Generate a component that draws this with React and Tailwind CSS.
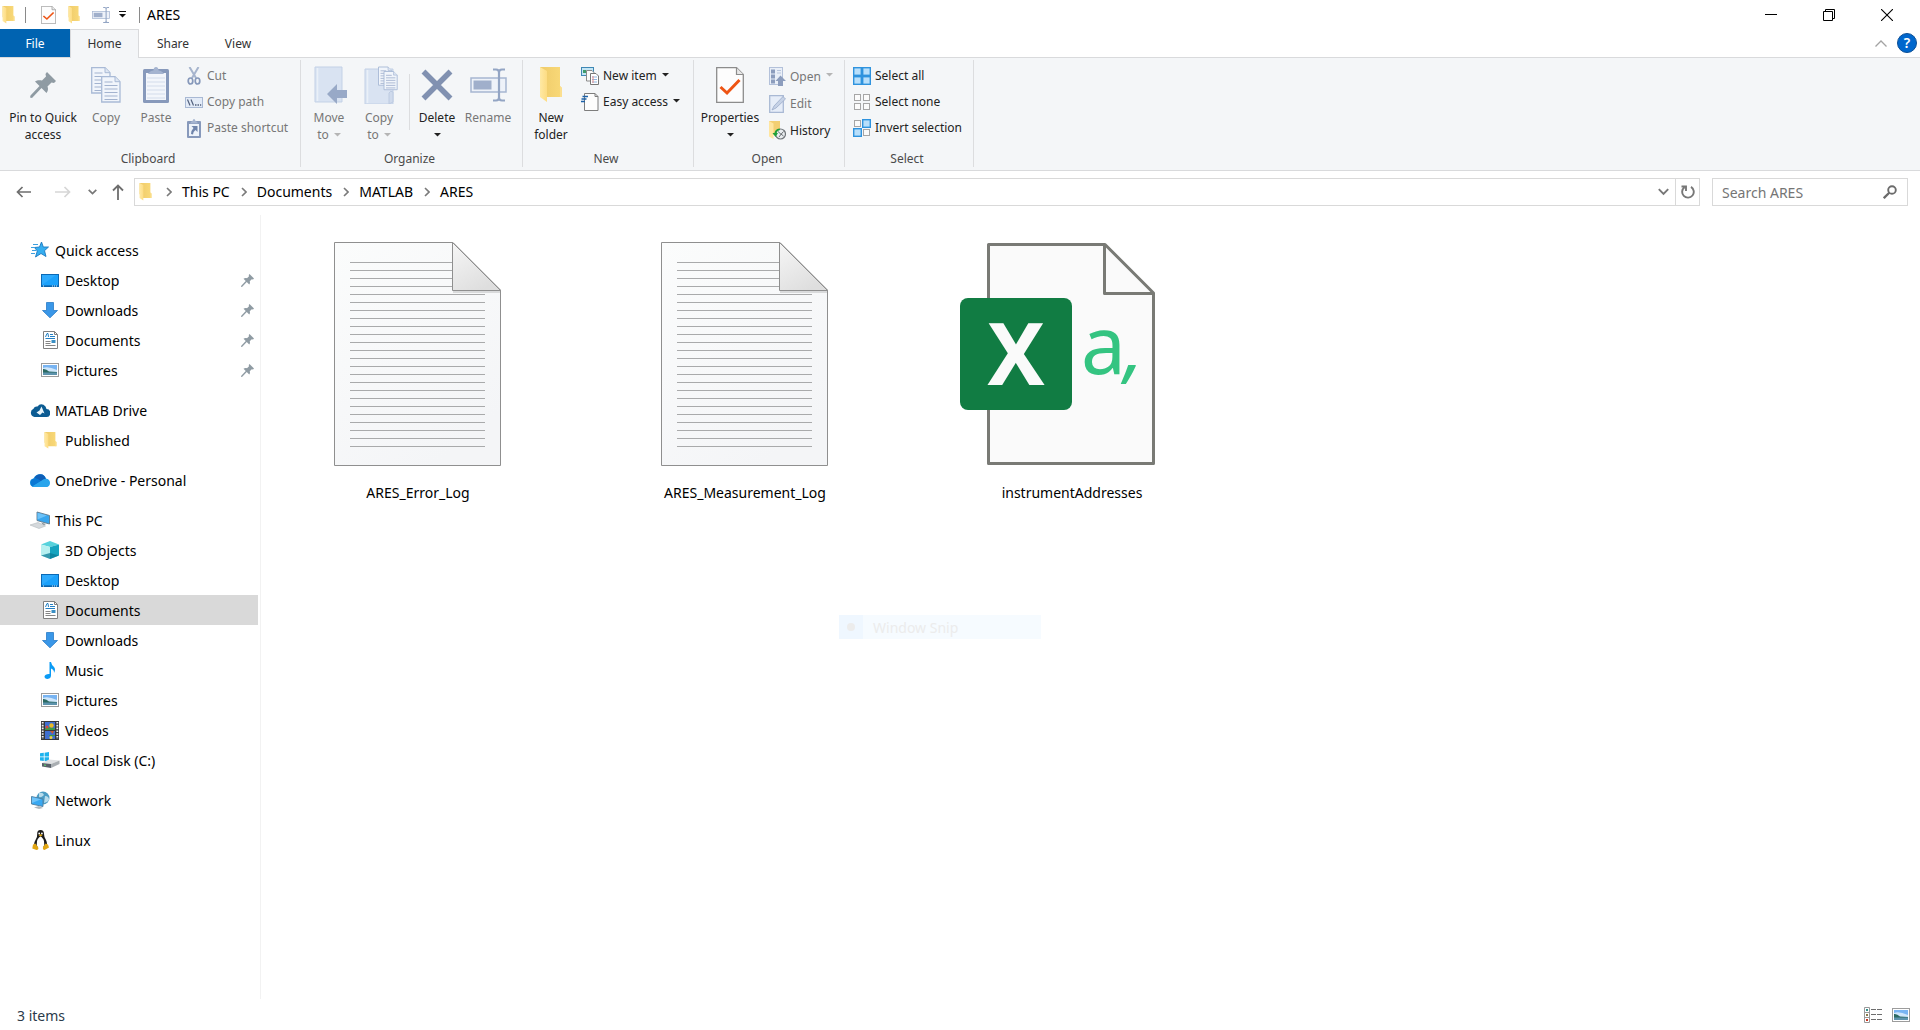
import React from "react";

/* ---------- small glyphs ---------- */

const Caret = ({ className = "" }) => (
  <svg width="7" height="4" viewBox="0 0 7 4" className={className} fill="currentColor" aria-hidden="true">
    <path d="M0 0h7L3.500 3.500z" />
  </svg>
);

const Chevron = ({ className = "" }) => (
  <svg width="6" height="10" viewBox="0 0 6 10" className={className} fill="none" stroke="#7a7a7a" strokeWidth="1.6" aria-hidden="true">
    <path d="M1 1l4 4-4 4" />
  </svg>
);

const Folder = ({ w = 13, h = 18 }) => (
  <svg width={w} height={h} viewBox="0 0 24 36" preserveAspectRatio="none" aria-hidden="true">
    <defs>
      <linearGradient id="folderFront" x1="0" x2="1">
        <stop offset="0" stopColor="#ffe9a4" />
        <stop offset="1" stopColor="#fddc83" />
      </linearGradient>
      <linearGradient id="folderBack" x1="0" x2="1">
        <stop offset="0" stopColor="#efcb6a" />
        <stop offset="1" stopColor="#f9d978" />
      </linearGradient>
    </defs>
    <path d="M1 0H21V19L23 21V30H7L1 22z" fill="url(#folderBack)" />
    <path d="M1 0L8 4V35L1 30z" fill="url(#folderFront)" />
    <path d="M21 19l2 2v9h-2z" fill="#fbdf90" />
  </svg>
);

const CheckDoc = ({ w = 28, h = 36 }) => (
  <svg width={w} height={h} viewBox="0 0 28 36" preserveAspectRatio="none" aria-hidden="true">
    <path d="M.7.7H20.500L27.300 7.500V35.300H.7z" fill="#fdfdfd" stroke="#8c8c8c" strokeWidth="1.300" />
    <path d="M20.500.7V7.500H27.300" fill="#e8e8e8" stroke="#8c8c8c" strokeWidth="1.200" />
    <path d="M4.500 20L11 26L23.500 13" fill="none" stroke="#ee5414" strokeWidth="3" />
  </svg>
);

const RenameIcon = ({ w = 37, h = 34 }) => (
  <svg width={w} height={h} viewBox="0 0 37 34" aria-hidden="true">
    <rect x="1" y="10" width="35" height="14" fill="#eef2f9" stroke="#a6b6d1" strokeWidth="1.500" />
    <rect x="3.500" y="12.500" width="18" height="9" fill="#a0afcb" />
    <path d="M23 1.500h3q3 0 3 3 0-3 3-3h3M29 4v26M23 32.500h3q3 0 3-3 0 3 3 3h3" fill="none" stroke="#93a5c4" strokeWidth="2.200" />
  </svg>
);

const Pin = ({ size = 26 }) => (
  <svg width={size} height={size} viewBox="0 0 26 26" aria-hidden="true">
    <path d="M17 0L26 9L24 11L21.500 10.500L17.500 14.500C18.500 17 18 19 16.500 21L11.500 16L2 26L0 25.500L.5 23.500L9.500 14L5 9.500C7 8 9.500 8 12 8.500L16 4.500L15.500 2z" fill="#8f9ba3" />
  </svg>
);

const Sheet = ({ x = 0, y = 0 }) => (
  <g transform={`translate(${x} ${y})`}>
    <path d="M.7.7H14L19 5.700V26H.7z" fill="#f1f5fb" stroke="#a9bad6" strokeWidth="1.300" />
    <path d="M14 .7V5.700H19" fill="#dfe7f3" stroke="#a9bad6" />
    <path d="M3.500 6h8M3.500 9.500h13M3.500 13h13M3.500 16.500h13M3.500 20h13M3.500 23.500h13" stroke="#a3b3cf" strokeWidth="1.200" />
  </g>
);

const CopyIcon = () => (
  <svg width="30" height="36" viewBox="0 0 30 36" aria-hidden="true">
    <Sheet />
    <Sheet x={10} y={9} />
  </svg>
);

const PasteIcon = () => (
  <svg width="26" height="36" viewBox="0 0 26 36" aria-hidden="true">
    <rect x="0" y="2" width="26" height="34" rx="1.500" fill="#8799bb" />
    <rect x="3" y="6" width="20" height="27" fill="#f3f6fb" />
    <path d="M4 11h18M4 15h18M4 19h18M4 23h18M4 27h18M4 31h18" stroke="#d3dcec" strokeWidth="1.200" />
    <path d="M5 7Q7 3.500 10.500 3.500Q10.500 0 13 0T15.500 3.500Q19 3.500 21 7z" fill="#a5b4d0" />
  </svg>
);

const CutIcon = () => (
  <svg width="14" height="18" viewBox="0 0 14 18" fill="none" aria-hidden="true">
    <path d="M2.500 0L9 11M11.500 0L5 11" stroke="#a6b4cd" strokeWidth="2" />
    <ellipse cx="3.500" cy="14" rx="2.300" ry="3" stroke="#8698ba" strokeWidth="1.700" />
    <ellipse cx="10.500" cy="14" rx="2.300" ry="3" stroke="#8698ba" strokeWidth="1.700" />
  </svg>
);

const CopyPathIcon = () => (
  <svg width="18" height="11" viewBox="0 0 18 11" aria-hidden="true">
    <rect x=".5" y=".5" width="17" height="10" fill="#e3ebf7" stroke="#a9b9d4" />
    <path d="M2.500 2.500L5 8.500M6 2.500L8.500 8.500" stroke="#53627e" strokeWidth="1.200" />
    <path d="M10 8h1.500M12.500 8H14M15 8h1.200" stroke="#53627e" strokeWidth="1.300" />
  </svg>
);

const PasteShortcutIcon = () => (
  <svg width="14" height="19" viewBox="0 0 14 19" aria-hidden="true">
    <rect y="2" width="14" height="17" rx="1" fill="#8799bb" />
    <rect x="2" y="5" width="10" height="12" fill="#eef3fa" />
    <path d="M3 4.500Q4 2 5.500 2Q6 0 7 0T8.500 2Q10 2 11 4.500z" fill="#a5b4d0" />
    <path d="M4.500 7H10.500V13L8.500 11Q6 12.500 6 15.500L4 15Q4 11.500 6.500 9z" fill="#6f84ab" />
  </svg>
);

const MoveToIcon = () => (
  <svg width="34" height="38" viewBox="0 0 34 38" aria-hidden="true">
    <path d="M1 1H28V36H1z" fill="#d9e3f2" stroke="#c3d1e6" />
    <path d="M3.500 2V35" stroke="#eaf0f8" strokeWidth="1.500" />
    <path d="M13 28L23 18V24H33V32H23V38z" fill="#98a9c7" />
  </svg>
);

const CopyToIcon = () => (
  <svg width="34" height="38" viewBox="0 0 34 38" aria-hidden="true">
    <path d="M1 3H29V38H1z" fill="#d9e3f2" stroke="#c3d1e6" />
    <path d="M3.500 4V37" stroke="#eaf0f8" strokeWidth="1.500" />
    <path d="M25 38V27Q26.500 24 29 26V36z" fill="#cfdaec" stroke="#bccae1" />
    <g transform="translate(14 .5) scale(.72)">
      <Sheet />
    </g>
    <g transform="translate(19.500 5) scale(.72)">
      <Sheet />
    </g>
  </svg>
);

const DeleteIcon = () => (
  <svg width="32" height="32" viewBox="0 0 32 32" aria-hidden="true">
    <path d="M2.500 2.500L29.500 29.500M29.500 2.500L2.500 29.500" stroke="#8191b1" strokeWidth="5.500" />
  </svg>
);

const NewItemIcon = () => (
  <svg width="18" height="18" viewBox="0 0 18 18" aria-hidden="true">
    <rect x=".5" y=".5" width="12" height="8" fill="#c4e6f5" stroke="#3f88b5" />
    <path d="M2 3h3v3H2z" fill="#3f9c6c" />
    <path d="M5.500 3.500H11L13 5.500V14H5.500z" fill="#fafafa" stroke="#8a8a8a" />
    <path d="M9.500 6.500H15L17.500 9V17.500H9.500z" fill="#fff" stroke="#777" />
    <path d="M11 10h5M11 12.500h5M11 15h5" stroke="#8db5e0" />
    <path d="M12 9v7" stroke="#e58b8b" />
  </svg>
);

const EasyAccessIcon = () => (
  <svg width="18" height="18" viewBox="0 0 18 18" aria-hidden="true">
    <path d="M3.500.5H14L17 3.500V17.500H3.500z" fill="#fdfdfd" stroke="#7d7d7d" />
    <path d="M14 .5V3.500H17" fill="none" stroke="#7d7d7d" />
    <path d="M1.500 3.500H7M.5 6H5.500M0 8.500H4" stroke="#1d62a8" strokeWidth="1.400" />
  </svg>
);

const OpenIcon = () => (
  <svg width="17" height="19" viewBox="0 0 17 19" aria-hidden="true">
    <rect x=".5" y=".5" width="13" height="17" fill="#e9eff8" stroke="#b3c1da" />
    <path d="M2 2.500h4v4H2zM2 7.500h4v4H2zM2 12.500h4v4H2z" fill="#8c9dbd" />
    <path d="M8 3.500h4M8 6h4" stroke="#b8c5dc" />
    <path d="M11.500 8.500L17 14H14V19H9V14H6.500z" fill="#8c9dbd" />
  </svg>
);

const EditIcon = () => (
  <svg width="17" height="18" viewBox="0 0 17 18" aria-hidden="true">
    <path d="M.7.7H14.300V17.300H.7z" fill="#e6edf8" stroke="#a9b9d4" strokeWidth="1.300" />
    <path d="M3 15L5 11L14 1.500L16.500 4L7 13z" fill="#c6d2e6" stroke="#9aabc9" strokeWidth=".8" />
  </svg>
);

const HistoryIcon = () => (
  <svg width="17" height="19" viewBox="0 0 17 19" aria-hidden="true">
    <path d="M0 0H11V14H4L0 12z" fill="#f2cf72" />
    <path d="M0 0L4.500 2.500V18L0 15.500z" fill="#ffe6a0" />
    <circle cx="11.500" cy="13" r="5" fill="#e9edf0" stroke="#6f7579" strokeWidth="1.200" />
    <path d="M9 10.500L12 13.300L14.500 10.500M12 13.300L10 16M12 13L14.500 15" stroke="#5b6165" fill="none" strokeWidth=".9" />
    <path d="M10.500 7.500Q6 8 5.500 12H3.500L6.500 16L9 12H7.500Q8 9.500 11 9z" fill="#1fa038" />
  </svg>
);

const Cells = ({ on }) => (
  <svg width="18" height="18" viewBox="0 0 18 18" aria-hidden="true">
    {[[0, 0], [9, 0], [0, 9], [9, 9]].map(([x, y], i) =>
      on[i] ? (
        <rect key={i} x={x + 0.7} y={y + 0.7} width="7.600" height="7.600" fill="#b8dffb" stroke="#2f93de" strokeWidth="1.400" />
      ) : (
        <rect key={i} x={x + 1.5} y={y + 1.500} width="6" height="6" fill="#fbfbfb" stroke="#a6a6a6" />
      )
    )}
  </svg>
);

/* ---------- navigation icons ---------- */

const StarIcon = () => (
  <svg width="20" height="18" viewBox="0 0 20 18" aria-hidden="true">
    <path d="M11.500 1L13.300 6H18.500L14.500 9.700L16 15.500L11 12.500L5.500 16L7.300 10L4.500 6.500L9.500 6z" fill="#35aef0" stroke="#1c78c0" strokeWidth=".9" />
    <path d="M3 3.500h5M1 6.500h4M2 9.500h4M1 12.500h4" stroke="#3c9fdf" />
  </svg>
);

const DesktopIcon = () => (
  <svg width="18" height="13" viewBox="0 0 18 13" aria-hidden="true">
    <rect x=".5" y=".5" width="17" height="12" fill="#1ba1fb" stroke="#0b69b5" />
    <path d="M1 11L15 1H1z" fill="#2eaafd" />
    <path d="M1 12h16" stroke="#0b62a8" strokeWidth="1.200" />
    <path d="M2 12h1M11 12h1M13 12h1M15 12h1" stroke="#d8efff" />
  </svg>
);

const DownloadIcon = () => (
  <svg width="16" height="16" viewBox="0 0 16 16" aria-hidden="true">
    <path d="M4.500.5H11.500V8.500H15.500L8 15.800L.5 8.500H4.500z" fill="#3a97e8" stroke="#2a7bc6" strokeWidth=".8" />
  </svg>
);

const DocumentIcon = () => (
  <svg width="15" height="18" viewBox="0 0 15 18" aria-hidden="true">
    <path d="M.5.5H11.500L14.500 3.500V17.500H.5z" fill="#fff" stroke="#808080" />
    <path d="M11.500.5V3.500H14.500" fill="none" stroke="#808080" />
    <path d="M2.500 6L4 2.500H5L5.500 6M7 3.500h3M7 5.500h5M2.500 7.500h9.500" stroke="#2480c4" fill="none" />
    <path d="M2.500 10.500h5M2.500 12.500h5M2.500 14.500h10" stroke="#858585" />
    <rect x="8.500" y="9" width="4" height="3" fill="#3b8fc4" />
  </svg>
);

const PictureIcon = () => (
  <svg width="18" height="14" viewBox="0 0 18 14" aria-hidden="true">
    <rect x=".5" y=".5" width="17" height="13" fill="#fff" stroke="#9c9c9c" />
    <rect x="2" y="2" width="14" height="10" fill="#78b4f2" />
    <path d="M2 5Q7 3 16 7V9H2z" fill="#cfe6fb" />
    <path d="M2 6Q5 5.500 8 8.500L16 9V10H2z" fill="#2c6a62" />
    <path d="M2 9.500H16V12H2z" fill="#5d93ad" />
  </svg>
);

const MatlabIcon = () => (
  <svg width="20" height="13" viewBox="0 0 20 13" aria-hidden="true">
    <path d="M4.500 13A4.300 4.300 0 0 1 3.500 4.800Q4.500 2 7.500 2.500Q10-1 13.500.8Q16 2 16.500 5A4 4 0 0 1 16 13z" fill="#0c5c93" />
    <path d="M6.500 8.500L9.500 6.500L11.500 2.500L14.500 9.500L12.500 8.500L10 11z" fill="#eaf5fb" />
  </svg>
);

const OneDriveIcon = () => (
  <svg width="20" height="13" viewBox="0 0 20 13" aria-hidden="true">
    <path d="M4 13A4.300 4.300 0 0 1 3.500 4.500Q6 0 10.500 .3Q14.500.5 16 4.800A4.200 4.200 0 0 1 16 13z" fill="#1490df" />
    <path d="M4.500 4Q6.500 0 10.500.3Q14.500.5 15.800 4.800L11 7.500z" fill="#0f5fb8" />
    <path d="M1 11Q-.5 6 4 4.500Q7 3.500 11 7.200L2.500 12.500z" fill="#0a78d4" />
    <path d="M2.500 12.300L11 7Q14 4.500 16.500 4.800Q20 5.500 20 9Q19.800 12.800 16 13H4Q3 13 2.500 12.300z" fill="#2aa5ec" />
  </svg>
);

const ThisPcIcon = () => (
  <svg width="20" height="18" viewBox="0 0 20 18" aria-hidden="true">
    <path d="M7 1L19.500 4.500V13L7 9.500z" fill="#38a6ee" stroke="#62798a" strokeWidth=".9" />
    <path d="M7.500 1.800L17 4.400L7.500 8.500z" fill="#6cc2f8" />
    <path d="M11 11.500L16 13L13.500 14.500z" fill="#8b979e" />
    <path d="M0 14L8 11.500L15.500 15L9 17.500z" fill="#d5d9dc" stroke="#b4babd" strokeWidth=".6" />
  </svg>
);

const CubeIcon = () => (
  <svg width="18" height="18" viewBox="0 0 18 18" aria-hidden="true">
    <path d="M0 3.500L9 0L18 3.500L9 6z" fill="#57d2dc" />
    <path d="M0 3.500L9 6V18L0 14.500z" fill="#b6f0f0" />
    <path d="M18 3.500L9 6V18L18 14.500z" fill="#16a4bf" />
    <path d="M0 14.500L9 12L18 14.500L9 18z" fill="#0b7c97" opacity=".75" />
  </svg>
);

const MusicIcon = () => (
  <svg width="12" height="17" viewBox="0 0 12 17" aria-hidden="true">
    <path d="M5.500 0H7Q7.500 3 10 5Q12 7.500 10 11Q10.300 7.500 7 6.500V13.500Q7 16.500 3.500 17Q.5 16.800.5 14.500Q1 11.800 5.500 12z" fill="#0a9bf5" />
  </svg>
);

const VideoIcon = () => (
  <svg width="18" height="19" viewBox="0 0 18 19" aria-hidden="true">
    <rect width="18" height="19" fill="#37383a" />
    <path d="M1.700 1V18M16.300 1V18" stroke="#f2f2f2" strokeWidth="1.800" strokeDasharray="1.600 1.200" />
    <rect x="4" y="1" width="10" height="8" fill="#3f6fd0" />
    <rect x="4" y="10" width="10" height="8" fill="#3f6fd0" />
    <path d="M4 7.500Q7 5 14 7.500V9H4zM8 14H14V15H8z" fill="#3b9b46" />
    <circle cx="10.500" cy="4.500" r="2.200" fill="#e9b928" />
    <circle cx="6" cy="6" r="1.500" fill="#d84a3a" />
    <path d="M9 10H13L11.500 13z" fill="#cc5a2b" />
    <circle cx="10" cy="16.500" r="1.500" fill="#f0d23c" />
  </svg>
);

const DiskIcon = () => (
  <svg width="20" height="16" viewBox="0 0 20 16" aria-hidden="true">
    <path d="M0 1.300L3.800.8V4.500H0zM4.600.7L9 0V4.500H4.600zM0 5.300H3.800V9L0 8.500zM4.600 5.300H9V9.700L4.600 9.100z" fill="#1db3ee" />
    <path d="M2 11L9 7.500L19.500 8.500L11 12z" fill="#dfe1e3" />
    <path d="M2 11L11 12V16L2 14.500z" fill="#58606a" />
    <path d="M11 12L19.500 8.500V12L11 16z" fill="#a9aeb2" />
    <path d="M4 13L6 13.300" stroke="#5fe06c" />
  </svg>
);

const NetworkIcon = () => (
  <svg width="19" height="18" viewBox="0 0 19 18" aria-hidden="true">
    <circle cx="12" cy="7" r="6.500" fill="#4b9cc4" />
    <path d="M8 2Q12 1 13 4Q10 7 8 6zM14 5Q18 5 18 9Q16 12 13 12z" fill="#b7dcec" />
    <path d="M.5 5.500L12 8V15.500L.5 13z" fill="#38a8f2" stroke="#4f7d9d" strokeWidth=".9" />
    <path d="M1 6.200L10 8.200L1 12z" fill="#70c4f9" />
    <path d="M3 16.500L8 15L12 17L8 18z" fill="#b0b7bc" />
  </svg>
);

const LinuxIcon = () => (
  <svg width="17" height="20" viewBox="0 0 17 20" aria-hidden="true">
    <path d="M8.500 0Q12 0 12 4Q12 7 14 10Q16 14 14 18H3Q1 14 3.500 10Q5.500 7 5.200 4Q5 0 8.500 0z" fill="#1b1b1b" />
    <path d="M8.500 6.500Q10.500 7 12 11Q13 15 11 18H6Q4 15 5 11Q6.500 7 8.500 6.500z" fill="#fff" />
    <circle cx="7.200" cy="3.500" r=".9" fill="#fff" />
    <circle cx="9.900" cy="3.500" r=".9" fill="#fff" />
    <path d="M6.500 5L8.500 4.200L10.700 5L8.500 6.600z" fill="#eeb111" />
    <path d="M1 14.500L3.500 13.500L6.500 18Q6.500 20 4.500 20L.3 18.500zM16 14.500L13.500 13.500L11 17Q10.500 20 12.500 20L17 17.500z" fill="#e0a512" />
  </svg>
);

/* ---------- large file icons ---------- */

const TextFileIcon = () => (
  <svg width="256" height="256" viewBox="0 0 256 256" aria-hidden="true">
    <defs>
      <linearGradient id="paper" x1="0" y1="0" x2=".6" y2="1">
        <stop offset="0" stopColor="#fbfcfc" />
        <stop offset="1" stopColor="#f4f5f7" />
      </linearGradient>
      <linearGradient id="fold" x1="0" y1="0" x2=".6" y2="1">
        <stop offset="0" stopColor="#f6f6f6" />
        <stop offset="1" stopColor="#dedede" />
      </linearGradient>
    </defs>
    <path d="M44.500 16.500H163L210.500 64V239.500H44.500z" fill="url(#paper)" stroke="#8f8f8f" />
    {Array.from({ length: 24 }, (_, i) => (
      <path key={i} d={`M60 ${36.5 + i * 8}H${i < 4 ? 162 : 195}`} stroke="#a9aaab" />
    ))}
    <path d="M163 66H210" stroke="#d9dadb" strokeWidth="2" />
    <path d="M162.500 16.500V64.500H210.500z" fill="url(#fold)" stroke="#8f8f8f" />
  </svg>
);

const ExcelCsvIcon = () => (
  <svg width="256" height="256" viewBox="0 0 256 256" aria-hidden="true">
    <path d="M44.500 18.500H161L209.500 67V237.500H44.500z" fill="#fafafa" stroke="#797a75" strokeWidth="3" strokeLinejoin="round" />
    <path d="M160.500 19V67.500H209" fill="none" stroke="#797a75" strokeWidth="3" strokeLinejoin="round" />
    <rect x="16" y="72" width="112" height="112" rx="8" fill="#117c43" />
    <text x="72" y="159" textAnchor="middle" fontFamily="'Noto Sans', sans-serif" fontWeight="700" fontSize="86" fill="#fafafa">X</text>
    <text x="137" y="148" fontFamily="'Noto Sans', sans-serif" fontSize="80" fill="#34c481">a</text>
    <text x="180" y="148" fontFamily="'Noto Sans', sans-serif" fontSize="76" fontStyle="italic" fill="#34c481">,</text>
  </svg>
);

/* ---------- ribbon ---------- */

const Group = ({ label, className, inset, children }) => (
  <section aria-label={label} className={`mt-[2px] mb-[3px] flex flex-col border-r border-[#dcdddf] pt-[2px] ${className}`}>
    <div className={`flex h-[88px] items-start ${inset}`}>{children}</div>
    <div className="pt-px pr-1 text-center leading-4 text-[#4a4a4a]">{label}</div>
  </section>
);

const Large = ({ icon, lines, caret, disabled, className }) => (
  <button type="button" disabled={disabled} className={`flex shrink-0 flex-col items-center pt-[3px] leading-[17px] whitespace-nowrap ${disabled ? "text-[#777]" : "text-[#222]"} ${className}`}>
    <span className="mb-1 flex h-10 items-center justify-center">{icon}</span>
    <span>{lines[0]}</span>
    {(lines[1] || caret) && (
      <span className="flex h-[17px] items-center justify-center gap-[5px]">
        {lines[1]}
        {caret && <Caret className={disabled ? "text-[#b5b5b5]" : "text-[#222]"} />}
      </span>
    )}
  </button>
);

const Small = ({ icon, label, caret, disabled, className = "h-[26px]" }) => (
  <button type="button" disabled={disabled} className={`flex items-center whitespace-nowrap ${disabled ? "text-[#777]" : "text-[#222]"} ${className}`}>
    <span className="mr-1 flex w-[18px] justify-center">{icon}</span>
    {label}
    {caret && <Caret className={`mb-[3px] ml-[5px] ${disabled ? "text-[#b5b5b5]" : "text-[#222]"}`} />}
  </button>
);

const SmallColumn = ({ className = "", children }) => (
  <div className={`flex flex-col items-start pt-px ${className}`}>{children}</div>
);

const Ribbon = () => (
  <div className="flex border-b border-[#d9dadc] bg-[#f4f6f8] text-xs">
    <Group label="Clipboard" className="w-[301px]" inset="pl-[5px]">
      <Large className="w-[76px]" icon={<Pin />} lines={["Pin to Quick", "access"]} />
      <Large className="w-[50px]" icon={<CopyIcon />} lines={["Copy"]} disabled />
      <Large className="w-[50px]" icon={<PasteIcon />} lines={["Paste"]} disabled />
      <SmallColumn className="ml-1">
        <Small icon={<CutIcon />} label="Cut" disabled />
        <Small icon={<CopyPathIcon />} label="Copy path" disabled />
        <Small icon={<PasteShortcutIcon />} label="Paste shortcut" disabled />
      </SmallColumn>
    </Group>
    <Group label="Organize" className="w-[222px]" inset="pl-[3px]">
      <Large className="w-[50px]" icon={<span className="pl-1"><MoveToIcon /></span>} lines={["Move", "to"]} caret disabled />
      <Large className="w-[50px]" icon={<span className="pl-1"><CopyToIcon /></span>} lines={["Copy", "to"]} caret disabled />
      <div className="mt-3 mr-0.5 ml-[5px] h-14 w-px bg-[#dcdddf]" />
      <Large className="w-[50px]" icon={<DeleteIcon />} lines={["Delete"]} caret />
      <Large className="w-[52px]" icon={<RenameIcon />} lines={["Rename"]} disabled />
    </Group>
    <Group label="New" className="w-[171px]" inset="pl-[3px]">
      <Large className="w-[50px]" icon={<Folder w={24} h={36} />} lines={["New", "folder"]} />
      <SmallColumn className="ml-[5px]">
        <Small icon={<NewItemIcon />} label="New item" caret />
        <Small icon={<EasyAccessIcon />} label="Easy access" caret />
      </SmallColumn>
    </Group>
    <Group label="Open" className="w-[151px]" inset="pl-[2px]">
      <Large className="w-[68px]" icon={<CheckDoc />} lines={["Properties"]} caret />
      <SmallColumn className="ml-1">
        <Small className="h-[27px]" icon={<OpenIcon />} label="Open" caret disabled />
        <Small className="h-[27px]" icon={<EditIcon />} label="Edit" disabled />
        <Small className="h-[27px]" icon={<HistoryIcon />} label="History" />
      </SmallColumn>
    </Group>
    <Group label="Select" className="w-[129px]" inset="pl-2">
      <SmallColumn>
        <Small icon={<Cells on={[1, 1, 1, 1]} />} label="Select all" />
        <Small icon={<Cells on={[0, 0, 0, 0]} />} label="Select none" />
        <Small icon={<Cells on={[0, 1, 1, 0]} />} label="Invert selection" />
      </SmallColumn>
    </Group>
  </div>
);

/* ---------- window chrome ---------- */

const TitleBar = () => (
  <header className="flex h-[29px] items-center">
    <div className="flex items-center pl-[2px]">
      <Folder w={13} h={18} />
      <span className="mr-[15px] ml-[10px] h-4 w-px bg-[#8a8a8a]" />
      <button type="button" aria-label="Properties"><CheckDoc w={15} h={18} /></button>
      <button type="button" aria-label="New folder" className="ml-3"><Folder w={12} h={18} /></button>
      <button type="button" aria-label="Rename" className="ml-3"><RenameIcon w={18} h={18} /></button>
      <button type="button" aria-label="Customize Quick Access Toolbar" className="ml-[9px]">
        <svg width="7" height="7" viewBox="0 0 7 7" aria-hidden="true">
          <path d="M0 .5h7" stroke="#111" />
          <path d="M0 3h7L3.500 6.500z" fill="#111" />
        </svg>
      </button>
      <span className="ml-[13px] h-4 w-px bg-[#8a8a8a]" />
    </div>
    <h1 className="ml-[7px] text-sm">ARES</h1>
    <div className="mr-1 ml-auto flex">
      <button type="button" aria-label="Minimize" className="flex h-7 w-[58px] items-center justify-center">
        <svg width="12" height="12" viewBox="0 0 12 12"><path d="M0 5.500h12" stroke="#000" /></svg>
      </button>
      <button type="button" aria-label="Restore" className="flex h-7 w-[58px] items-center justify-center">
        <svg width="12" height="12" viewBox="0 0 12 12" fill="none" stroke="#000"><path d="M.5 2.500h9v9h-9zM2.500 2.500V.5h9v9h-2" /></svg>
      </button>
      <button type="button" aria-label="Close" className="flex h-7 w-[58px] items-center justify-center">
        <svg width="12" height="12" viewBox="0 0 12 12" stroke="#000" strokeWidth="1.100"><path d="M0 0l12 12M12 0L0 12" /></svg>
      </button>
    </div>
  </header>
);

const Tabs = () => (
  <div className="flex h-[29px] items-stretch text-xs text-[#333]">
    <button type="button" className="w-[70px] border-b border-[#d9dadc] bg-[#0063b1] pt-px text-white">File</button>
    <button type="button" className="w-[69px] border border-b-0 border-[#d9dadc] bg-[#f4f6f8]">Home</button>
    <div className="flex flex-1 items-center border-b border-[#d9dadc]">
      <button type="button" className="w-[68px] pt-px">Share</button>
      <button type="button" className="w-[62px] pt-px">View</button>
      <button type="button" aria-label="Minimize the Ribbon" className="mr-[10px] ml-auto">
        <svg width="12" height="7" viewBox="0 0 12 7" fill="none" stroke="#a3a3a3" strokeWidth="1.300"><path d="M.5 6.500L6 1l5.500 5.500" /></svg>
      </button>
      <button type="button" aria-label="Help" className="mr-[3px] flex size-5 items-center justify-center rounded-full border border-[#0c4f96] bg-[#0067cd] text-sm leading-none font-semibold text-white">?</button>
    </div>
  </div>
);

const AddressRow = () => (
  <div className="flex h-[44px] items-start pt-[7px] text-sm">
    <div className="flex h-7 w-[134px] items-center">
      <button type="button" aria-label="Back" className="ml-4">
        <svg width="16" height="12" viewBox="0 0 16 12" fill="none" stroke="#6e6e6e" strokeWidth="1.700"><path d="M15 6H1.500M6.500 1l-5 5 5 5" /></svg>
      </button>
      <button type="button" aria-label="Forward" className="ml-[23px]">
        <svg width="16" height="12" viewBox="0 0 16 12" fill="none" stroke="#d6d6d6" strokeWidth="1.700"><path d="M0 6h14M9.500 1l5 5-5 5" /></svg>
      </button>
      <button type="button" aria-label="Recent locations" className="ml-[17px]">
        <svg width="9" height="6" viewBox="0 0 9 6" fill="none" stroke="#777" strokeWidth="1.700"><path d="M.7.8l3.800 3.700L8.300.8" /></svg>
      </button>
      <button type="button" aria-label="Up" className="ml-[15px]">
        <svg width="12" height="16" viewBox="0 0 12 16" fill="none" stroke="#6e6e6e" strokeWidth="1.800"><path d="M6 16V1.500M1 6.500l5-5 5 5" /></svg>
      </button>
    </div>
    <nav aria-label="Address" className="flex h-7 flex-1 items-center border border-[#d9d9d9] pl-1">
      <Folder w={13} h={18} />
      {["This PC", "Documents", "MATLAB", "ARES"].map((name, i) => (
        <React.Fragment key={name}>
          <Chevron className={i === 0 ? "mr-[10px] ml-[14px]" : "mr-[10px] ml-[11px]"} />
          <a href="#">{name}</a>
        </React.Fragment>
      ))}
      <button type="button" aria-label="Previous locations" className="mr-[6px] ml-auto">
        <svg width="11" height="8" viewBox="0 0 11 8" fill="none" stroke="#777" strokeWidth="1.900"><path d="M.8 1.200l4.700 4.800 4.700-4.800" /></svg>
      </button>
      <button type="button" aria-label="Refresh" className="flex h-full w-6 items-center justify-center border-l border-[#d9d9d9]">
        <svg width="14" height="14" viewBox="0 0 14 14" fill="none" stroke="#777" strokeWidth="1.900"><path d="M10 1.900A5.800 5.800 0 1 1 3.500 2.200M.5 1.500H5V6" /></svg>
      </button>
    </nav>
    <label className="mr-3 ml-3 flex h-7 w-[196px] items-center border border-[#d9d9d9] pr-[10px] pl-[9px]">
      <input type="text" aria-label="Search ARES" placeholder="Search ARES" className="min-w-0 flex-1 pt-px outline-none placeholder:text-[#757575]" />
      <svg width="14" height="14" viewBox="0 0 14 14" fill="none" stroke="#6b6b6b" aria-hidden="true">
        <circle cx="9" cy="5" r="3.800" strokeWidth="1.900" />
        <path d="M6.200 7.800L.8 13.200" strokeWidth="2.300" />
      </svg>
    </label>
  </div>
);

/* ---------- navigation pane ---------- */

const tree = [
  {
    name: "Quick access", icon: <StarIcon />, children: [
      { name: "Desktop", icon: <DesktopIcon />, pinned: true },
      { name: "Downloads", icon: <DownloadIcon />, pinned: true },
      { name: "Documents", icon: <DocumentIcon />, pinned: true },
      { name: "Pictures", icon: <PictureIcon />, pinned: true },
    ],
  },
  { name: "MATLAB Drive", icon: <MatlabIcon />, children: [{ name: "Published", icon: <Folder w={13} h={17} /> }] },
  { name: "OneDrive - Personal", icon: <OneDriveIcon />, children: [] },
  {
    name: "This PC", icon: <ThisPcIcon />, children: [
      { name: "3D Objects", icon: <CubeIcon /> },
      { name: "Desktop", icon: <DesktopIcon /> },
      { name: "Documents", icon: <DocumentIcon />, selected: true },
      { name: "Downloads", icon: <DownloadIcon /> },
      { name: "Music", icon: <MusicIcon /> },
      { name: "Pictures", icon: <PictureIcon /> },
      { name: "Videos", icon: <VideoIcon /> },
      { name: "Local Disk (C:)", icon: <DiskIcon /> },
    ],
  },
  { name: "Network", icon: <NetworkIcon />, children: [] },
  { name: "Linux", icon: <LinuxIcon />, children: [] },
];

const NavItem = ({ item, nested }) => (
  <a href="#" className={`flex h-[30px] items-center ${nested ? "pl-10" : "pl-[30px]"} ${item.selected ? "bg-[#d9d9d9]" : ""}`}>
    <span className="mr-[5px] flex w-5 justify-center">{item.icon}</span>
    <span className="pt-0.5">{item.name}</span>
    {item.pinned && <span className="mr-1 ml-auto"><Pin size={13} /></span>}
  </a>
);

const Sidebar = () => (
  <nav aria-label="Navigation pane" className="flex w-[261px] shrink-0 flex-col gap-[10px] border-r border-[#f2f2f2] pt-5 pr-[2px] text-sm">
    {tree.map((section) => (
      <div key={section.name}>
        <NavItem item={section} />
        {section.children.map((child) => <NavItem key={child.name} item={child} nested />)}
      </div>
    ))}
  </nav>
);

const files = [
  { name: "ARES_Error_Log", icon: <TextFileIcon /> },
  { name: "ARES_Measurement_Log", icon: <TextFileIcon /> },
  { name: "instrumentAddresses", icon: <ExcelCsvIcon /> },
];

export default function App() {
  return (
    <div className="flex min-h-screen flex-col bg-white font-['Noto_Sans','Open_Sans',sans-serif] text-black">
      <TitleBar />
      <Tabs />
      <Ribbon />
      <AddressRow />
      <div className="relative flex flex-1">
        <Sidebar />
        <main className="flex flex-1 flex-wrap content-start gap-x-[27px] pt-[11px] pl-[7px] text-sm">
          {files.map((f) => (
            <button type="button" key={f.name} className="flex w-[300px] flex-col items-center leading-5">
              {f.icon}
              <span className="pt-px">{f.name}</span>
            </button>
          ))}
        </main>
        <div className="absolute top-[400px] left-[839px] flex h-6 w-[202px] items-center bg-[#f6fbff] text-sm text-[#ececec]">
          <span className="mr-[10px] flex h-full w-6 items-center justify-center bg-[#eff7ff]">
            <span className="size-2 rounded-full bg-[#ececec]" />
          </span>
          <span className="pt-0.5">Window Snip</span>
        </div>
      </div>
      <footer className="flex h-[31px] items-center pr-[10px] pl-[17px] text-sm text-[#2b3a4a]">
        <span className="pt-0.5">3 items</span>
        <button type="button" aria-label="Details view" className="ml-auto">
          <svg width="18" height="16" viewBox="0 0 18 16">
            <path d="M.5.5h5v15h-5zM.5 5.500h5M.5 10.500h5" fill="#fff" stroke="#9a9a9a" />
            <path d="M2 2h2v2H2z" fill="#2e8f8a" />
            <path d="M2 7h2v2H2z" fill="#8a7a4a" />
            <path d="M2 12h2v2H2z" fill="#c8321e" />
            <path d="M7 2.500h5M13 2.500h5M7 7.500h5M13 7.500h5M7 12.500h5M13 12.500h5" stroke="#6d6d6d" />
          </svg>
        </button>
        <button type="button" aria-label="Large icons view" className="ml-[10px]"><PictureIcon /></button>
      </footer>
    </div>
  );
}
